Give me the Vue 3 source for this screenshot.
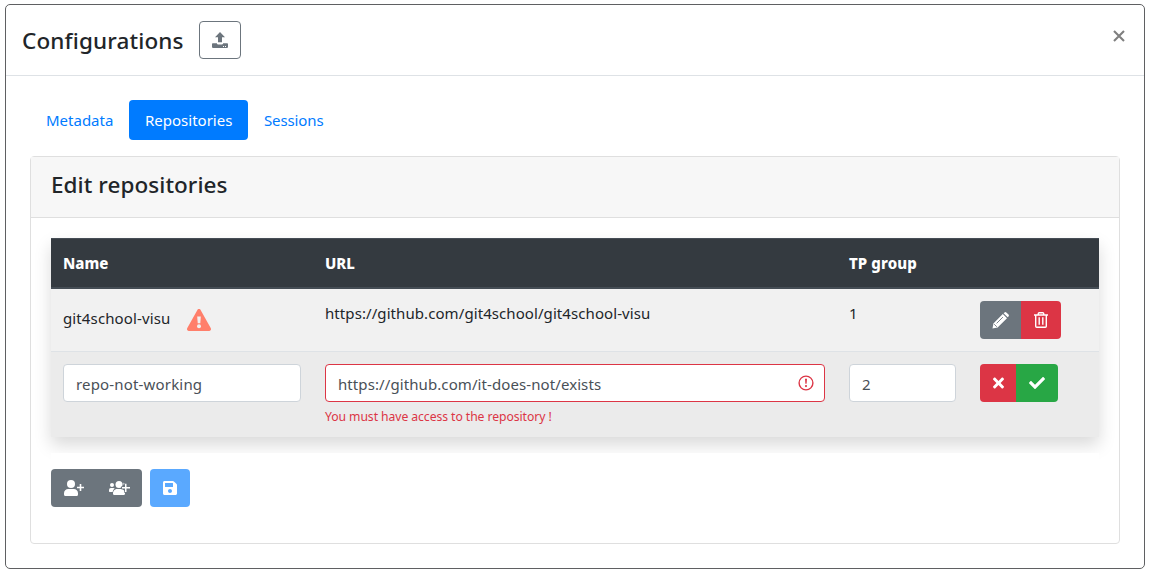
<script setup>
const tabs = ['Metadata', 'Repositories', 'Sessions']
const active = 'Repositories'
</script>

<template>
  <main class="modal">
    <header class="modal-head">
      <h1>Configurations</h1>
      <button class="btn outline" aria-label="Upload">
        <svg width="16" height="16" viewBox="0 0 16 16" fill="currentColor"><path d="M8 0 13 5.3H10v4.9H6V5.3H3zM.8 11.2h4.1c.2 1 .8 1.4 1.7 1.4h2.8c.9 0 1.5-.4 1.7-1.4h4.1c.5 0 .8.3.8.8v3.1c0 .5-.3.8-.8.8H.8c-.5 0-.8-.3-.8-.8V12c0-.5.3-.8.8-.8zm10.2 2.8v1h1v-1zm2 0v1h1v-1z" fill-rule="evenodd"/></svg>
      </button>
      <button class="close" aria-label="Close">
        <svg width="12" height="12" viewBox="0 0 12 12" fill="none" stroke="#7f7f7f" stroke-width="2.1"><path d="m1 1 10 10M11 1 1 11"/></svg>
      </button>
    </header>
    <section class="modal-body">
      <nav>
        <a v-for="tab in tabs" :key="tab" :class="['tab', tab.toLowerCase(), { active: tab === active }]"><span>{{ tab }}</span></a>
      </nav>
      <article class="card">
        <div class="card-head"><h2>Edit repositories</h2></div>
        <div class="card-body">
          <div class="table">
            <div class="row head">
              <div><span>Name</span></div>
              <div><span>URL</span></div>
              <div><span class="h-group">TP group</span></div>
              <div></div>
            </div>
            <div class="row first">
              <div class="name">
                <span class="repo">git4school-visu</span>
                <svg width="24" height="22" viewBox="0 0 24 22"><path fill="#ff7f6b" d="M10.4.9a1.8 1.8 0 0 1 3.2 0l10.1 18.2A1.9 1.9 0 0 1 22.1 22H1.9A1.9 1.9 0 0 1 .3 19.1z"/><path fill="#f1f1f1" d="M10.2 7.5h3.6l-.5 6.8h-2.6z"/><circle cx="12" cy="17.3" r="2" fill="#f1f1f1"/></svg>
              </div>
              <div><span class="url">https://github.com/git4school/git4school-visu</span></div>
              <div><span>1</span></div>
              <div>
                <div class="group">
                  <button class="btn gray edit" aria-label="Edit"><svg width="17" height="17" viewBox="0 0 17 17"><path fill="#fff" d="m.5 16.5.9-5.1L10.8 2l4.200 4.200-9.400 9.400zM11.600 1.200l.900-.800q.9-.8 1.800 0l2.200 2.200q.8.9 0 1.800l-.800.900z"/><path d="m4.600 11.400 6.300-6.300M2.200 12.200l2.600 2.600" fill="none" stroke="#6c757d" stroke-width=".9"/></svg></button>
                  <button class="btn red trash" aria-label="Delete"><svg width="14" height="16" viewBox="0 0 14 16" fill="none" stroke="#fff" stroke-width="1.4"><path d="M0 3h14M4.3 3V1.6q0-.9.9-.9h3.6q.9 0 .9.9V3M1.7 3v11.3q0 1 1 1h8.6q1 0 1-1V3M5.2 5.3v7.5M8.8 5.3v7.5"/></svg></button>
                </div>
              </div>
            </div>
            <div class="row second">
              <div><div class="field"><span class="in-name">repo-not-working</span></div></div>
              <div>
                <div class="field invalid">
                  <span class="in-url">https://github.com/it-does-not/exists</span>
                  <svg width="16" height="16" viewBox="0 0 16 16"><circle cx="8" cy="8" r="6.9" fill="none" stroke="#dc3545" stroke-width="1.4"/><path d="M7 3.8h2l-.4 5H7.4z" fill="#dc3545"/><circle cx="8" cy="11.1" r="1.05" fill="#dc3545"/></svg>
                </div>
                <p class="error"><span>You must have access to the repository !</span></p>
              </div>
              <div><div class="field"><span>2</span></div></div>
              <div>
                <div class="group">
                  <button class="btn red cancel" aria-label="Cancel"><svg width="11" height="16" viewBox="0 0 352 512" fill="#fff"><path d="M242.72 256l100.07-100.07c12.28-12.28 12.28-32.19 0-44.48l-22.24-22.24c-12.28-12.28-32.19-12.28-44.48 0L176 189.28 75.93 89.21c-12.28-12.28-32.19-12.28-44.48 0L9.21 111.45c-12.28 12.28-12.28 32.19 0 44.48L109.28 256 9.21 356.07c-12.28 12.28-12.28 32.19 0 44.48l22.24 22.24c12.28 12.28 32.2 12.28 44.48 0L176 322.72l100.07 100.07c12.28 12.28 32.2 12.28 44.48 0l22.24-22.24c12.28-12.28 12.28-32.19 0-44.48L242.72 256z"/></svg></button>
                  <button class="btn green confirm" aria-label="Confirm"><svg width="16" height="16" viewBox="0 0 512 512" fill="#fff"><path d="M173.898 439.404l-166.4-166.4c-9.997-9.997-9.997-26.206 0-36.204l36.203-36.204c9.997-9.998 26.207-9.998 36.204 0L192 312.69 432.095 72.596c9.997-9.997 26.207-9.997 36.204 0l36.203 36.204c9.997 9.997 9.997 26.206 0 36.204l-294.4 294.401c-9.998 9.997-26.207 9.997-36.204-.001z"/></svg></button>
                </div>
              </div>
            </div>
          </div>
          <div class="actions">
            <div class="group">
              <button class="btn gray add" aria-label="Add one"><svg width="20" height="16" viewBox="0 0 20 16" fill="#fff"><circle cx="7" cy="4" r="4"/><path d="M4.2 9h5.6a4.2 4.2 0 0 1 4.2 4.2v1.3q0 1.5-1.5 1.5h-11Q0 16 0 14.5v-1.3A4.2 4.2 0 0 1 4.2 9zM15.700 4h1.600v2.700H20v1.600h-2.700V11h-1.600V8.300H13V6.700h2.700z"/></svg></button>
              <button class="btn gray add-many" aria-label="Add several"><svg width="21" height="16" viewBox="0 0 21 16" fill="#fff"><circle cx="3" cy="5" r="2"/><circle cx="10" cy="4.5" r="3.5"/><path d="M1.8 8h2.5q.8 0 1.4.6Q3.8 9.800 3.600 12H.7Q0 12 0 11.300V9.900Q0 8 1.800 8zM7.200 9h5.600q3 1 3.200 4v.7q0 1.300-1.300 1.300H5.300Q4 15 4 13.700V13q.2-3 3.200-4z"/><path d="M16.700 2.500v10.500M12 7.900h9" fill="none" stroke="#6c757d" stroke-width="2.600"/><circle cx="14.700" cy="3.800" r="1" opacity=".5"/><path d="M16 3.800h1.500v3.300H21v1.500h-3.500V12H16V8.600h-3V7.100h3z"/></svg></button>
            </div>
            <button class="btn blue" aria-label="Save"><svg width="14" height="16" viewBox="0 0 448 512" fill="#fff"><path d="M433.941 129.941l-83.882-83.882A48 48 0 0 0 316.118 32H48C21.49 32 0 53.49 0 80v352c0 26.51 21.49 48 48 48h352c26.51 0 48-21.49 48-48V163.882a48 48 0 0 0-14.059-33.941zM224 416c-35.346 0-64-28.654-64-64 0-35.346 28.654-64 64-64s64 28.654 64 64c0 35.346-28.654 64-64 64zm96-304.52V212c0 6.627-5.373 12-12 12H76c-6.627 0-12-5.373-12-12V108c0-6.627 5.373-12 12-12h228.52c3.183 0 6.235 1.264 8.485 3.515l3.48 3.48A11.996 11.996 0 0 1 320 111.48z"/></svg></button>
          </div>
        </div>
      </article>
    </section>
  </main>
</template>

<style>
body { background: #fff; }
</style>

<style scoped>
* { box-sizing: border-box; }
.modal { width: 1140px; height: 565px; margin: 4px 0 0 5px; border: 1px solid #5f6062; border-radius: 5px; font: 15px/24px "Noto Sans", "Open Sans", sans-serif; color: #212529; white-space: nowrap; overflow: hidden; }
span { display: inline-block; }
h1, h2, p { margin: 0; }
h1, h2 { font-size: 22.5px; line-height: 36px; font-weight: 500; letter-spacing: .06px; }
button { padding: 0; border: 0; background: none; }
svg { display: block; flex: none; }
.modal-head { height: 71px; border-bottom: 1px solid #dee2e6; display: flex; align-items: flex-start; padding: 16px; }
h1 { width: 177px; padding-top: 2px; letter-spacing: .14px; }
.btn { height: 38px; display: flex; align-items: center; justify-content: center; }
.outline { width: 42px; border: 1px solid #6c757d; border-radius: 4px; color: #6c757d; }
.close { margin: 9px 3px 0 auto; }
.modal-body { padding: 24px; }
nav { display: flex; height: 40px; margin-bottom: 16px; }
.tab { padding: 8px 16px; color: #007bff; border-radius: 4px; }
.metadata { width: 99px; }
.repositories { width: 119px; }
.sessions { letter-spacing: -.12px; }
.tab.active { background: #007bff; color: #fff; }
.card { height: 388px; border: 1px solid #dfdfdf; border-radius: 4px; }
.card-head { height: 61px; background: #f7f7f7; border-bottom: 1px solid #dfdfdf; padding: 10px 20px; }
.card-body { padding: 20px; }
.table { box-shadow: 0 8px 16px rgba(0, 0, 0, .15); background: #f1f1f1; }
.row { display: grid; grid-template-columns: 262px 524px 131px 131px; }
.row > div { padding: 12px; }
.head { height: 51px; background: #343a40; color: #fff; font-weight: 800; border-top: 1px solid #454d55; border-bottom: 2px solid #454d55; }
.h-group { letter-spacing: .1px; }
.first { height: 62px; }
.second { height: 86px; background: #ebebeb; border-top: 1px solid #dee2e6; }
.name { display: flex; gap: 17px; }
.name span { margin-top: 5px; }
.name svg { margin-top: 8px; }
.repo { width: 107px; letter-spacing: .12px; }
.url { letter-spacing: .08px; }
.in-name { letter-spacing: .17px; }
.in-url { letter-spacing: .09px; }
.group { display: flex; width: max-content; border-radius: 4px; overflow: hidden; }
.gray { background: #6c757d; }
.red { background: #dc3545; }
.green { background: #28a745; }
.blue { width: 40px; background: #5aa9ff; border-radius: 4px; }
.edit { width: 41px; }
.trash { width: 40px; }
.cancel { width: 36px; }
.confirm { width: 42px; }
.field { height: 38px; border: 1px solid #ced4da; border-radius: 4px; background: #fff; color: #495057; padding: 7px 12px; display: flex; justify-content: space-between; }
.field svg { margin: 3px -2px 0 0; }
.invalid { border-color: #dc3545; }
.error { color: #dc3545; font-size: 12.2px; line-height: 18px; margin-top: 6px; letter-spacing: -.07px; }
.actions { display: flex; gap: 8px; margin-top: 16px; padding-top: 16px; background: #fff; }
.add { width: 46px; }
.add-many { width: 45px; }
</style>
